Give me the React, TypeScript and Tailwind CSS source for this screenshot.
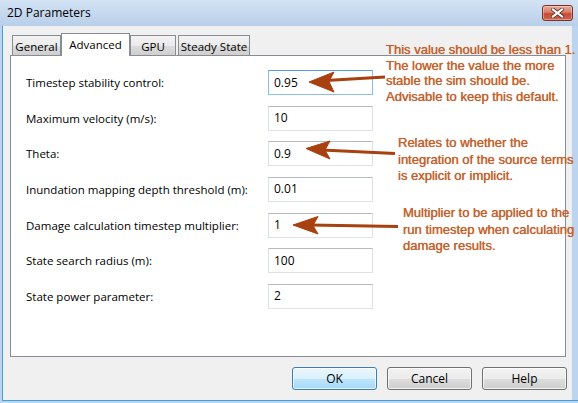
const rows = [
    { label: "Timestep stability control:", value: "0.95", focus: true },
    { label: "Maximum velocity (m/s):", value: "10" },
    { label: "Theta:", value: "0.9" },
    { label: "Inundation mapping depth threshold (m):", value: "0.01" },
    { label: "Damage calculation timestep multiplier:", value: "1" },
    { label: "State search radius (m):", value: "100" },
    { label: "State power parameter:", value: "2" },
];

const btn =
    "w-[85px] h-[23px] rounded-[3px] border flex items-center justify-center shadow-[inset_0_0_0_1px_rgba(255,255,255,0.7)]";

function Tab({ label, selected, className }: { label: string; selected?: boolean; className: string }) {
    if (selected) {
        return (
            <div className={`h-[23px] bg-white border border-b-0 border-[#898c95] flex justify-center pt-[2px] ${className}`}>
                {label}
            </div>
        );
    }
    return (
        <div
            className={`h-[20px] mb-px border border-b-0 border-[#898c95] bg-[linear-gradient(#f3f3f3_0%,#ebebeb_50%,#dddddd_50%,#cfcfcf_100%)] flex justify-center pt-[2px] ${className}`}
        >
            {label}
        </div>
    );
}

export default function App() {
    return (
        <div className="relative w-[578px] h-[403px] overflow-hidden bg-[#bcd4ee] font-['Open_Sans',sans-serif] text-[11.5px] text-black">
            {/* title bar */}
            <div className="h-[26px] flex items-center justify-between pl-[7px] pr-[5px] bg-gradient-to-b from-[#d3e3f4] to-[#b8cfe9]">
                <span className="text-[12px]">2D Parameters</span>
                <div className="w-[31px] h-[16px] rounded-[3px] border border-[#7a3126] bg-[linear-gradient(#e9a99a_0%,#d97d69_45%,#c54a35_55%,#d0654c_100%)] flex items-center justify-center shadow-[inset_0_0_0_1px_rgba(255,255,255,0.35)]">
                    <svg width="13" height="10" viewBox="0 0 13 10">
                        <path d="M2 1.5 L11 8.5 M11 1.5 L2 8.5" stroke="#5a2a22" strokeWidth="3.6" strokeLinecap="square" />
                        <path d="M2 1.5 L11 8.5 M11 1.5 L2 8.5" stroke="#ffffff" strokeWidth="2.2" strokeLinecap="square" />
                    </svg>
                </div>
            </div>

            {/* client area */}
            <div className="h-[374px] ml-[2px] mr-[6px] border-l border-r border-l-[#3fa0dc] border-r-[#e6eef8] bg-[#f0f0f0] flex flex-col pt-[7px]">
                <div className="relative z-10 -mb-px h-[23px] flex items-end pl-[9px]">
                    <Tab label="General" className="w-[49px]" />
                    <Tab label="Advanced" selected className="w-[69px]" />
                    <Tab label="GPU" className="w-[46px]" />
                    <Tab label="Steady State" className="w-[72px] ml-[2px]" />
                </div>

                <div className="ml-[7px] mr-[5px] h-[302px] border border-[#898c95] bg-white pt-[14px] pl-[15px]">
                    <div className="grid grid-cols-[242px_105px] gap-y-[10.67px] items-center">
                        {rows.map((r) => (
                            <div key={r.label} className="contents">
                                <div className="whitespace-nowrap">{r.label}</div>
                                <div
                                    className={`h-[25px] border flex items-center pl-[5px] text-[12px] ${
                                        r.focus
                                            ? "border-[#8fbde9] border-t-[#569de5]"
                                            : "border-[#dde1e8] border-t-[#b4b9c2]"
                                    }`}
                                >
                                    {r.value}
                                </div>
                            </div>
                        ))}
                    </div>
                </div>

                <div className="mt-[10px] flex justify-end gap-[10px] pr-[4px] text-[12px]">
                    <div className={`${btn} border-[#3c7fb1] bg-[linear-gradient(#eaf6fd_0%,#d9f0fc_50%,#bee6fd_50%,#a7d9f5_100%)]`}>OK</div>
                    <div className={`${btn} border-[#707070] bg-[linear-gradient(#f2f2f2_0%,#ebebeb_50%,#dddddd_50%,#cfcfcf_100%)]`}>Cancel</div>
                    <div className={`${btn} border-[#707070] bg-[linear-gradient(#f2f2f2_0%,#ebebeb_50%,#dddddd_50%,#cfcfcf_100%)]`}>Help</div>
                </div>
            </div>
            <div className="h-[3px] ml-[2px] border-t border-[#3fa0dc]" />

            {/* annotations drawn over the dialog */}
            <svg className="absolute inset-0 pointer-events-none" width="578" height="403">
                <g fill="#a8400f" stroke="#a8400f">
                    <line x1="326" y1="80.5" x2="385" y2="77" strokeWidth="3" />
                    <path d="M309 82 L334 72 L329 81.5 L334 92 Z" strokeWidth="1" />
                    <line x1="322" y1="150" x2="395" y2="153.5" strokeWidth="3" />
                    <path d="M306 148.5 L330 141 L325 150 L330 159 Z" strokeWidth="1" />
                    <line x1="310" y1="225" x2="398" y2="226.5" strokeWidth="3" />
                    <path d="M293 225 L318 216.5 L313 225.5 L318 234 Z" strokeWidth="1" />
                </g>
            </svg>
            <div className="absolute left-[386px] top-[42px] whitespace-nowrap font-['Liberation_Sans',Arial,sans-serif] text-[13px] leading-[15.5px] text-[#c2602f] [text-shadow:0_0_0.7px_#c2602f]">
                This value should be less than 1.
                <br />
                The lower the value the more
                <br />
                stable the sim should be.
                <br />
                Advisable to keep this default.
            </div>
            <div className="absolute left-[398px] top-[135px] whitespace-nowrap font-['Liberation_Sans',Arial,sans-serif] text-[13px] leading-[16.5px] text-[#c2602f] [text-shadow:0_0_0.7px_#c2602f]">
                Relates to whether the
                <br />
                integration of the source terms
                <br />
                is explicit or implicit.
            </div>
            <div className="absolute left-[403px] top-[205px] whitespace-nowrap font-['Liberation_Sans',Arial,sans-serif] text-[13px] leading-[16.5px] text-[#c2602f] [text-shadow:0_0_0.7px_#c2602f]">
                Multiplier to be applied to the
                <br />
                run timestep when calculating
                <br />
                damage results.
            </div>
        </div>
    );
}
